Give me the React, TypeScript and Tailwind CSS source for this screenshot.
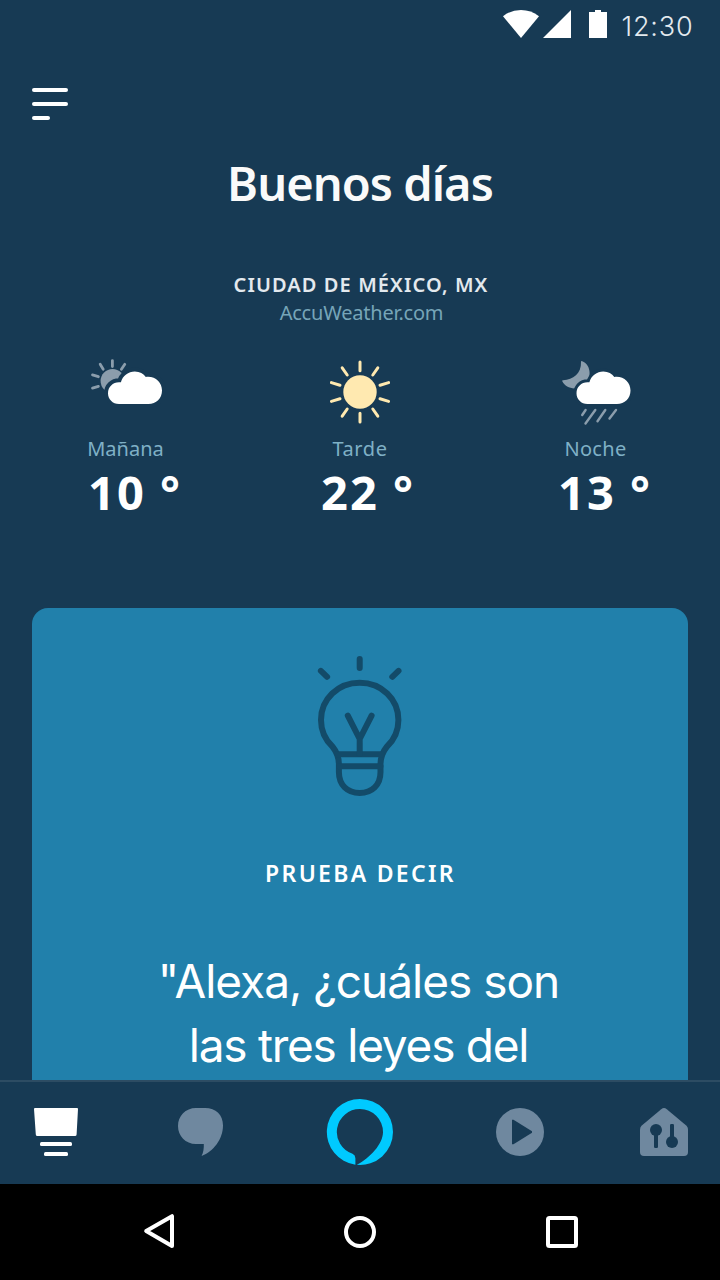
import type { ReactNode } from "react";

const CLOUD =
  "M119 404 C112.6 404 108 399 108 393.2 C108 387 112.8 382.3 119 382.3 C119.6 382.2 120.3 382.2 120.9 382.3 C122.6 375.6 128.5 371.4 134.8 371.4 C139.8 371.4 143.5 373.6 145.8 376.9 C154.8 375.6 162 382 162 390.4 C162 398.2 156.2 404 148.4 404 Z";

function StatusBar() {
  return (
    <div className="flex h-12 shrink-0 items-start justify-end pr-[26px]">
      <svg className="mr-[14px] h-12 w-[104px] shrink-0" viewBox="503 0 104 48" fill="#fff">
        <path d="M521 38 L503 16.2 Q511 10 521 10 Q531 10 539 16.2 Z" />
        <path d="M543 38 H571 V10 Z" />
        <path d="M589 12 H595 V10 H601 V12 H607 V38 H589 Z" />
      </svg>
      <span className="w-[73px] whitespace-nowrap pl-[0.5px] font-['Inter',sans-serif] text-[27px] font-light leading-[54px] tracking-[0.8px] text-[#e3e9ee]">
        12:30
      </span>
    </div>
  );
}

function MorningIcon() {
  return (
    <svg className="h-20 w-[100px]" viewBox="75 352 100 80">
      <circle cx="112.6" cy="381" r="12" fill="#8b9dac" />
      <path
        d="M112.4 360.6V366.6M100.2 364.3L103.2 369.3M124.8 364.3L121.4 369.3M92.5 374.9L98.4 376.7M92.5 388.1L98.4 386.4"
        stroke="#8b9dac"
        strokeWidth="2.8"
        strokeLinecap="round"
      />
      <path d={CLOUD} fill="#173a54" stroke="#173a54" strokeWidth="8" />
      <path d={CLOUD} fill="#fff" />
    </svg>
  );
}

function AfternoonIcon() {
  return (
    <svg className="h-20 w-[100px]" viewBox="310 352 100 80">
      <circle cx="360" cy="392" r="16.7" fill="#ffe9b0" />
      <path
        d="M360 362V370.7M360 413.3V422M342.2 367.8L347.2 375M377.8 367.8L372.8 375M342.2 416.2L347.2 409M377.8 416.2L372.8 409M331.4 382.6L340 385.3M388.6 382.6L380 385.3M331.4 401.4L340 398.7M388.6 401.4L380 398.7"
        stroke="#ffe9b0"
        strokeWidth="3"
        strokeLinecap="round"
      />
    </svg>
  );
}

function NightIcon() {
  return (
    <svg className="h-20 w-[100px]" viewBox="545 352 100 80">
      <path
        d="M582.2 361.2 C586.8 363 589.6 367.5 589.6 373 C589.6 382 583 388.4 574.5 388.4 C569 388.4 564.5 385.8 562.4 381.6 C562 380.8 562.4 380.3 563.2 380.3 C573 379.8 581.5 373.5 581 362 C581 361.3 581.4 360.9 582.2 361.2 Z"
        fill="#8b9dac"
      />
      <path
        d="M582.2 415L585.6 410M585.5 423.5L595.3 410M597.5 421.3L605.3 410M609.5 418.5L616 410"
        stroke="#8b9dac"
        strokeWidth="2.4"
        strokeLinecap="round"
      />
      <g transform="translate(468.5 0)">
        <path d={CLOUD} fill="none" stroke="#173a54" strokeWidth="6" />
        <path d={CLOUD} fill="#fff" />
      </g>
    </svg>
  );
}

function Forecast({ icon, label, temp }: { icon: ReactNode; label: ReactNode; temp: ReactNode }) {
  return (
    <div className="flex w-[235px] flex-col items-center">
      {icon}
      <div className="h-[30px] pt-[3px] text-[20px] leading-7 text-[#7fb0c6]">{label}</div>
      {temp}
    </div>
  );
}

function BulbIcon() {
  return (
    <svg
      className="h-[152px] w-[100px]"
      viewBox="310 650 100 152"
      fill="none"
      stroke="#134b69"
      strokeWidth="6"
      strokeLinecap="round"
      strokeLinejoin="round"
    >
      <path d="M359.7 659V668M320.9 670.9L327.1 676.8M398.5 670.9L392.3 676.8" />
      <path d="M332.4 746.5 C325 739.5 321 730 321 720 C321 699 338 682.8 359.7 682.8 C381.4 682.8 398.4 699 398.4 720 C398.4 730 394.4 739.5 387 746.5 C382.5 752 380.4 758 380.5 765 V772 C380.5 785 372 793 359.7 793 C347.4 793 338.9 785 338.9 772 V765 C339 758 336.9 752 332.4 746.5 Z" />
      <path d="M337.5 754.3H381.9M339 766.3H380.4" />
      <path d="M347.8 715.6L359.7 739L371.6 715.6M359.7 739V754" />
    </svg>
  );
}

function TabBar() {
  return (
    <nav className="flex h-[104px] shrink-0 items-center gap-[88px] border-t-2 border-[#2d4c63] px-8 pb-0.5">
      <svg className="h-[72px] w-12 shrink-0" viewBox="32 1096 48 72" fill="#fff">
        <path d="M35 1108H77Q78.1 1108 78 1109L76.6 1134.5Q76.5 1136 75 1136H37.3Q36 1136 35.8 1134.5L34 1109Q34 1108 35 1108Z" />
        <rect x="40" y="1142" width="32" height="4" rx="1.5" />
        <rect x="44" y="1152" width="24" height="4" rx="1.5" />
      </svg>
      <svg className="-ml-1 h-[72px] w-[72px] shrink-0" viewBox="164 1096 72 72" fill="#6f889f">
        <path d="M196 1108H205C216 1108 223 1115 223 1125.5C223 1139 213.5 1151.5 201.6 1156C203.4 1152.5 204 1148 203.8 1144H196C185.5 1144 178 1136 178 1126C178 1116 185.5 1108 196 1108Z" />
      </svg>
      <svg className="h-[72px] w-[72px] shrink-0" viewBox="324 1096 72 72" fill="#00caff">
        <path d="M355.4 1164.7V1158.2Q355.4 1155.3 352.5 1153.8A23 23 0 0 1 360 1109A23 23 0 0 1 383 1132C383 1144 370 1158 356.8 1164.85A33 33 0 0 0 393 1132A33 33 0 0 0 360 1099A33 33 0 0 0 355.4 1164.7Z" />
      </svg>
      <svg className="-mr-1 h-[72px] w-[72px] shrink-0" viewBox="484 1096 72 72">
        <circle cx="520" cy="1132" r="24" fill="#6f889f" />
        <path d="M512 1119.8H513.5L532 1131.2V1132.8L513.5 1144.2H512Z" fill="#173a54" />
      </svg>
      <svg className="h-[72px] w-12 shrink-0" viewBox="640 1096 48 72">
        <path
          d="M661.2 1109.2Q664 1106.9 666.8 1109.2L686.5 1125.8Q688 1127.2 688 1129.5V1152Q688 1156 684 1156H644Q640 1156 640 1152V1129.5Q640 1127.2 641.5 1125.8Z"
          fill="#6f889f"
        />
        <g fill="#173a54">
          <circle cx="656" cy="1130" r="6" />
          <rect x="654" y="1130" width="4" height="18" rx="1.2" />
          <circle cx="672" cy="1142" r="6" />
          <rect x="670" y="1124" width="4" height="18" rx="1.2" />
        </g>
      </svg>
    </nav>
  );
}

function SystemBar() {
  return (
    <div className="flex h-24 shrink-0 items-center justify-between bg-black px-[140px]">
      <svg className="h-10 w-10" viewBox="140 1212 40 40" fill="none" stroke="#fff" strokeWidth="4" strokeLinejoin="round">
        <path d="M172 1216.2V1246L146.2 1231Z" />
      </svg>
      <svg className="h-10 w-10" viewBox="340 1212 40 40" fill="none" stroke="#fff" strokeWidth="4">
        <circle cx="360" cy="1232" r="14" />
      </svg>
      <svg className="h-10 w-10" viewBox="540 1212 40 40" fill="none" stroke="#fff" strokeWidth="4">
        <rect x="548" y="1218" width="28" height="28" rx="1.5" />
      </svg>
    </div>
  );
}

export default function App() {
  return (
    <div className="flex h-[1280px] w-[720px] flex-col overflow-hidden bg-[#173a54] font-['Noto_Sans',sans-serif] text-white">
      <StatusBar />
      <header className="h-[103px] shrink-0 px-8 pt-10">
        <div className="flex flex-col gap-2.5">
          <span className="h-1 w-9 rounded-sm bg-white" />
          <span className="h-1 w-9 rounded-sm bg-white" />
          <span className="h-1 w-[18px] rounded-sm bg-white" />
        </div>
      </header>
      <main className="flex min-h-0 flex-1 flex-col overflow-hidden">
        <h1 className="text-center text-[47px] font-semibold leading-[64px] tracking-[-0.95px] text-[#fafafa]">Buenos días</h1>
        <div className="mt-14 flex flex-col items-center">
          <span className="pl-0.5 text-[20px] font-semibold leading-7 tracking-[1.1px] text-[#e3e9ee]">CIUDAD DE MÉXICO, MX</span>
          <span className="pl-[3px] text-[20px] leading-7 tracking-[-0.2px] text-[#76a5b8]">AccuWeather.com</span>
        </div>
        <section className="mt-[25px] flex justify-center">
          <Forecast
            icon={<MorningIcon />}
            label={<span className="pl-px tracking-[0px]">Mañana</span>}
            temp={<span className="pl-5 text-[47px] font-bold leading-[60px] tracking-[2px]">10 °</span>}
          />
          <Forecast
            icon={<AfternoonIcon />}
            label={<span className="tracking-[0.6px]">Tarde</span>}
            temp={<span className="pl-4 text-[47px] font-bold leading-[60px] tracking-[2px]">22 °</span>}
          />
          <Forecast
            icon={<NightIcon />}
            label={<span className="pl-px tracking-[0.3px]">Noche</span>}
            temp={<span className="pl-5 text-[47px] font-bold leading-[60px] tracking-[2px]">13 °</span>}
          />
        </section>
        <section className="mx-8 mt-[86px] flex min-h-0 flex-1 flex-col items-center rounded-t-2xl bg-[#2180ab] pt-[42px]">
          <BulbIcon />
          <h2 className="mt-[55px] pl-px text-[23px] font-semibold leading-8 tracking-[2.3px]">PRUEBA DECIR</h2>
          <p className="mt-[60px] flex flex-col items-center whitespace-nowrap pr-[3px] font-['Inter',sans-serif] text-[46px] leading-[64px]">
            <span className="tracking-[-1px]">"Alexa, ¿cuáles son</span>
            <span className="tracking-[-1.25px]">las tres leyes del</span>
          </p>
        </section>
      </main>
      <TabBar />
      <SystemBar />
    </div>
  );
}
